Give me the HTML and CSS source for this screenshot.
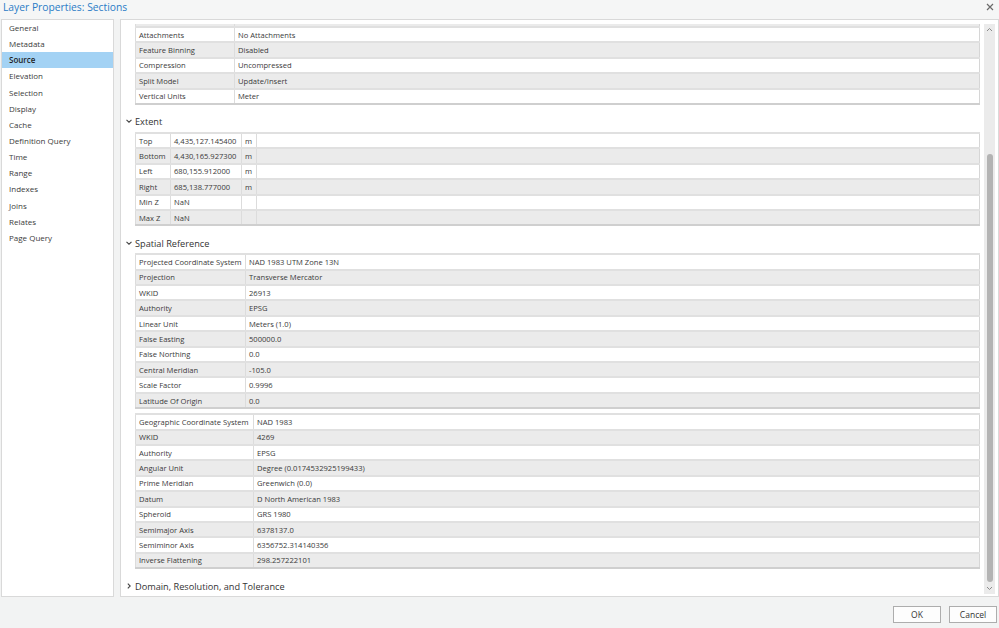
FILE: index.html
```html
<!DOCTYPE html>
<html>

<head>
    <title>Layer Properties: Sections</title>
    <link rel="stylesheet" href="styles.css">
</head>

<body>
    <div class="titlebar">
        <span class="title">Layer Properties: Sections</span>
        <svg class="close" width="8" height="8" viewBox="0 0 8 8">
            <path d="M1 1 L7 7 M7 1 L1 7" stroke="#6b6b6b" stroke-width="1.2" fill="none" />
        </svg>
    </div>

    <div class="main">
        <div class="nav">
            <div class="nav-item">General</div>
            <div class="nav-item">Metadata</div>
            <div class="nav-item selected">Source</div>
            <div class="nav-item">Elevation</div>
            <div class="nav-item">Selection</div>
            <div class="nav-item">Display</div>
            <div class="nav-item">Cache</div>
            <div class="nav-item">Definition Query</div>
            <div class="nav-item">Time</div>
            <div class="nav-item">Range</div>
            <div class="nav-item">Indexes</div>
            <div class="nav-item">Joins</div>
            <div class="nav-item">Relates</div>
            <div class="nav-item">Page Query</div>
        </div>

        <div class="panel">
            <div class="viewport">
                <div class="content">
                    <table class="props first">
                        <colgroup><col class="c99"><col></colgroup>
                        <!-- row scrolled out of view, only its bottom edge shows -->
                        <tr><td></td><td></td></tr>
                        <tr><td>Attachments</td><td>No Attachments</td></tr>
                        <tr><td>Feature Binning</td><td>Disabled</td></tr>
                        <tr><td>Compression</td><td>Uncompressed</td></tr>
                        <tr><td>Split Model</td><td>Update/Insert</td></tr>
                        <tr><td>Vertical Units</td><td>Meter</td></tr>
                    </table>

                    <div class="section-head">
                        <svg class="chev" width="6" height="4" viewBox="0 0 6 4">
                            <path d="M0.5 0.8 L3 3.2 L5.5 0.8" stroke="#444" stroke-width="1.1" fill="none" />
                        </svg>Extent
                    </div>
                    <table class="props extent">
                        <colgroup><col class="c35"><col class="c71"><col class="c15"><col></colgroup>
                        <tr><td>Top</td><td>4,435,127.145400</td><td>m</td><td></td></tr>
                        <tr><td>Bottom</td><td>4,430,165.927300</td><td>m</td><td></td></tr>
                        <tr><td>Left</td><td>680,155.912000</td><td>m</td><td></td></tr>
                        <tr><td>Right</td><td>685,138.777000</td><td>m</td><td></td></tr>
                        <tr><td>Min Z</td><td>NaN</td><td></td><td></td></tr>
                        <tr><td>Max Z</td><td>NaN</td><td></td><td></td></tr>
                    </table>

                    <div class="section-head">
                        <svg class="chev" width="6" height="4" viewBox="0 0 6 4">
                            <path d="M0.5 0.8 L3 3.2 L5.5 0.8" stroke="#444" stroke-width="1.1" fill="none" />
                        </svg>Spatial Reference
                    </div>
                    <table class="props">
                        <colgroup><col class="c110"><col></colgroup>
                        <tr><td>Projected Coordinate System</td><td>NAD 1983 UTM Zone 13N</td></tr>
                        <tr><td>Projection</td><td>Transverse Mercator</td></tr>
                        <tr><td>WKID</td><td>26913</td></tr>
                        <tr><td>Authority</td><td>EPSG</td></tr>
                        <tr><td>Linear Unit</td><td>Meters (1.0)</td></tr>
                        <tr><td>False Easting</td><td>500000.0</td></tr>
                        <tr><td>False Northing</td><td>0.0</td></tr>
                        <tr><td>Central Meridian</td><td>-105.0</td></tr>
                        <tr><td>Scale Factor</td><td>0.9996</td></tr>
                        <tr><td>Latitude Of Origin</td><td>0.0</td></tr>
                    </table>

                    <table class="props geo">
                        <colgroup><col class="c118"><col></colgroup>
                        <tr><td>Geographic Coordinate System</td><td>NAD 1983</td></tr>
                        <tr><td>WKID</td><td>4269</td></tr>
                        <tr><td>Authority</td><td>EPSG</td></tr>
                        <tr><td>Angular Unit</td><td>Degree (0.0174532925199433)</td></tr>
                        <tr><td>Prime Meridian</td><td>Greenwich (0.0)</td></tr>
                        <tr><td>Datum</td><td>D North American 1983</td></tr>
                        <tr><td>Spheroid</td><td>GRS 1980</td></tr>
                        <tr><td>Semimajor Axis</td><td>6378137.0</td></tr>
                        <tr><td>Semiminor Axis</td><td>6356752.314140356</td></tr>
                        <tr><td>Inverse Flattening</td><td>298.257222101</td></tr>
                    </table>

                    <div class="section-head">
                        <svg class="chev" width="6" height="6" viewBox="0 0 6 6">
                            <path d="M1.8 0.6 L4.2 3 L1.8 5.4" stroke="#444" stroke-width="1.1" fill="none" />
                        </svg>Domain, Resolution, and Tolerance
                    </div>
                </div>
            </div>

            <div class="scrollbar">
                <svg class="arrow" width="7" height="5" viewBox="0 0 7 5">
                    <path d="M1 4 L3.5 1.5 L6 4" stroke="#8a8a8a" stroke-width="1" fill="none" />
                </svg>
                <div class="track">
                    <div class="thumb"></div>
                </div>
                <svg class="arrow" width="7" height="5" viewBox="0 0 7 5">
                    <path d="M1 1 L3.5 3.5 L6 1" stroke="#8a8a8a" stroke-width="1" fill="none" />
                </svg>
            </div>
        </div>
    </div>

    <div class="footer">
        <button class="btn">OK</button>
        <button class="btn">Cancel</button>
    </div>
</body>

</html>
```

FILE: styles.css
```css
body {
    margin: 0;
    width: 999px;
    height: 628px;
    overflow: hidden;
    background-color: #f2f3f3;
    font-family: 'Open Sans', 'Noto Sans', Arial, sans-serif;
    color: #333333;
}

.titlebar {
    display: flex;
    justify-content: space-between;
    align-items: flex-start;
    height: 19px;
    padding: 0 5px 0 3px;
    background-color: #f5f6f6;
}

.title {
    font-size: 10.3px;
    line-height: 14px;
    color: #2a7cc6;
}

.close {
    margin-top: 3px;
}

.main {
    display: flex;
    height: 578px;
    padding-left: 1px;
}

.nav {
    width: 111px;
    background-color: #ffffff;
    border: 1px solid #d9d9d9;
    margin-right: 6px;
}

.nav-item {
    height: 16.15px;
    line-height: 16.15px;
    padding-left: 7px;
    font-size: 8px;
    color: #3b3b3b;
}

.nav-item.selected {
    background-color: #a3d2f4;
    font-weight: 600;
    color: #1f1f1f;
}

.panel {
    width: 874px;
    display: flex;
    background-color: #ffffff;
    border: 1px solid #d9d9d9;
    padding: 4px 3px 2px 0;
}

.viewport {
    flex: 1;
    overflow: hidden;
}

.content {
    padding-left: 14px;
}

.props {
    width: 845px;
    border-collapse: collapse;
    table-layout: fixed;
    font-size: 7.6px;
    border: 1px solid #d6d6d6;
    border-bottom: 2px solid #cfcfcf;
}

.props.first {
    margin-top: -13.4px;
}

.props.geo {
    margin-top: 4px;
}

.props td {
    height: 13.4px;
    padding: 0 0 0 3px;
    border-top: 2px solid #e0e0e0;
    border-left: 1px solid #dcdcdc;
    white-space: nowrap;
    overflow: hidden;
    color: #3a3a3a;
}

.props tr:nth-child(even) td {
    background-color: #ebebeb;
}

.first tr:nth-child(odd) td {
    background-color: #ebebeb;
}

.first tr:nth-child(even) td {
    background-color: #ffffff;
}

.c99 { width: 99px; }
.c35 { width: 35px; }
.c71 { width: 71px; }
.c15 { width: 15px; }
.c110 { width: 110px; }
.c118 { width: 118px; }

.section-head {
    display: flex;
    align-items: center;
    height: 14px;
    margin: 10px 0 3px -10px;
    font-size: 9.2px;
    color: #333333;
}

.chev {
    flex-shrink: 0;
    margin: 0 3px 1px 1px;
}

.scrollbar {
    width: 11px;
    margin-left: 1px;
    display: flex;
    flex-direction: column;
    align-items: center;
    background-color: #ebebeb;
    padding: 3px 0;
}

.arrow {
    flex-shrink: 0;
}

.track {
    flex: 1;
    width: 100%;
    display: flex;
    flex-direction: column;
    align-items: center;
    padding: 122px 0 4px;
}

.thumb {
    flex: 1;
    width: 6px;
    border-radius: 3px;
    background-color: #b3b3b3;
}

.footer {
    display: flex;
    justify-content: flex-end;
    padding: 9px 2px 0 0;
}

.btn {
    width: 48px;
    height: 17px;
    margin-left: 8px;
    padding: 0;
    background-color: #fdfdfd;
    border: 1px solid #adadad;
    font-family: 'Open Sans', Arial, sans-serif;
    font-size: 8.5px;
    color: #333333;
}
```
